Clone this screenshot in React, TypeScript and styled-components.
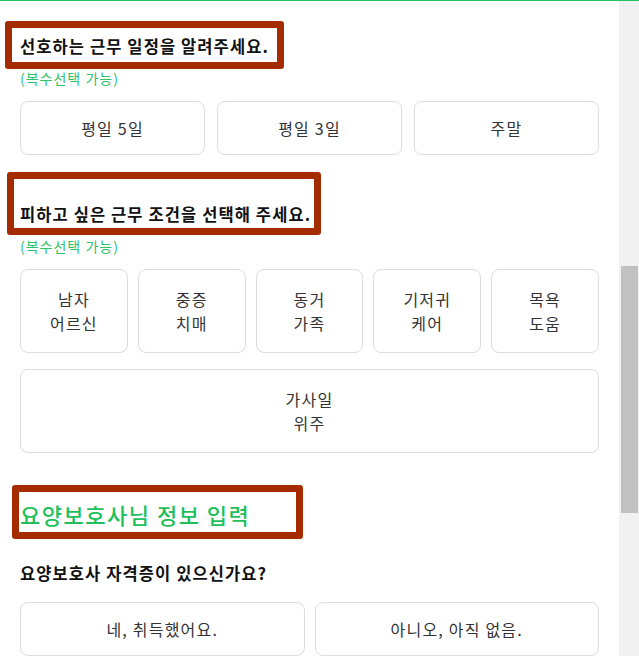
import React from "react";
import styled, { createGlobalStyle } from "styled-components";

const GlobalStyle = createGlobalStyle`
  html, body { margin: 0; padding: 0; background: #ffffff; }
  body { font-family: "Noto Sans CJK KR", "Noto Sans", sans-serif; color: #222; }
  * { box-sizing: border-box; }
`;

const Page = styled.div`
  width: 639px;
  height: 656px;
  display: flex;
  flex-direction: column;
  overflow: hidden;
`;

const TopLine = styled.div`
  height: 1px;
  flex: none;
  background: #1fc35f;
`;

const Body = styled.div`
  flex: 1;
  display: flex;
  min-height: 0;
`;

const Content = styled.main`
  flex: 1;
  padding: 33px 20px 0 20px;
  display: flex;
  flex-direction: column;
`;

const ScrollTrack = styled.div`
  width: 20px;
  flex: none;
  background: #f1f1f1;
  padding: 265px 1px 0 2px;
`;

const ScrollThumb = styled.div`
  height: 247px;
  background: #c1c1c1;
`;

const Section = styled.section<{ $gap: number }>`
  margin-top: ${(p) => p.$gap}px;
  display: flex;
  flex-direction: column;
`;

const TitleWrap = styled.div`
  position: relative;
`;

const Highlight = styled.span<{ $top: number; $left: number; $width: number; $height: number }>`
  position: absolute;
  top: ${(p) => p.$top}px;
  left: ${(p) => p.$left}px;
  width: ${(p) => p.$width}px;
  height: ${(p) => p.$height}px;
  border: 7px solid #a52b00;
  border-radius: 3px;
  pointer-events: none;
`;

const Title = styled.h2`
  margin: 0;
  font-size: 16.5px;
  line-height: 24px;
  font-weight: 700;
  color: #111;
  letter-spacing: 1.1px;
  white-space: nowrap;
`;

const Heading = styled.h1`
  margin: 0;
  font-size: 22px;
  line-height: 30px;
  font-weight: 500;
  color: #1fbf5c;
  letter-spacing: 1.5px;
  white-space: nowrap;
`;

const Sub = styled.p`
  margin: 10px 0 0 0;
  font-size: 14px;
  line-height: 20px;
  color: #2cc36a;
  letter-spacing: 1px;
`;

const Options = styled.div<{ $cols: number; $gap: number; $top: number }>`
  margin-top: ${(p) => p.$top}px;
  display: grid;
  grid-template-columns: repeat(${(p) => p.$cols}, 1fr);
  column-gap: ${(p) => p.$gap}px;
  row-gap: 16px;
`;

const Option = styled.button<{ $tall?: boolean; $full?: boolean }>`
  height: ${(p) => (p.$tall ? 84 : 54)}px;
  grid-column: ${(p) => (p.$full ? "1 / -1" : "auto")};
  border: 1px solid #dddddd;
  border-radius: 8px;
  background: #ffffff;
  font-family: inherit;
  font-size: 16px;
  line-height: 24px;
  letter-spacing: 1.2px;
  color: #333;
  display: flex;
  flex-direction: column;
  align-items: center;
  justify-content: center;
  padding: 0 4px;
  cursor: pointer;
`;

const Line = styled.span`
  display: block;
`;

const schedules = ["평일 5일", "평일 3일", "주말"];
const conditions = [
  ["남자", "어르신"],
  ["중증", "치매"],
  ["동거", "가족"],
  ["기저귀", "케어"],
  ["목욕", "도움"],
];

export default function App() {
  return (
    <>
      <GlobalStyle />
      <Page>
        <TopLine />
        <Body>
          <Content>
            <Section $gap={0}>
              <TitleWrap>
                <Title>선호하는 근무 일정을 알려주세요.</Title>
                <Highlight $top={-13} $left={-15} $width={279} $height={48} />
              </TitleWrap>
              <Sub>(복수선택 가능)</Sub>
              <Options $cols={3} $gap={12} $top={13}>
                {schedules.map((s) => (
                  <Option key={s}>{s}</Option>
                ))}
              </Options>
            </Section>

            <Section $gap={47}>
              <TitleWrap>
                <Title>피하고 싶은 근무 조건을 선택해 주세요.</Title>
                <Highlight $top={-30} $left={-13} $width={314} $height={63} />
              </TitleWrap>
              <Sub>(복수선택 가능)</Sub>
              <Options $cols={5} $gap={10} $top={13}>
                {conditions.map(([a, b]) => (
                  <Option key={a} $tall>
                    <Line>{a}</Line>
                    <Line>{b}</Line>
                  </Option>
                ))}
                <Option $tall $full>
                  <Line>가사일</Line>
                  <Line>위주</Line>
                </Option>
              </Options>
            </Section>

            <Section $gap={46}>
              <TitleWrap>
                <Heading>요양보호사님 정보 입력</Heading>
                <Highlight $top={-14} $left={-8} $width={291} $height={54} />
              </TitleWrap>
            </Section>

            <Section $gap={32}>
              <Title>요양보호사 자격증이 있으신가요?</Title>
              <Options $cols={2} $gap={10} $top={17}>
                <Option>네, 취득했어요.</Option>
                <Option>아니오, 아직 없음.</Option>
              </Options>
            </Section>
          </Content>
          <ScrollTrack>
            <ScrollThumb />
          </ScrollTrack>
        </Body>
      </Page>
    </>
  );
}
